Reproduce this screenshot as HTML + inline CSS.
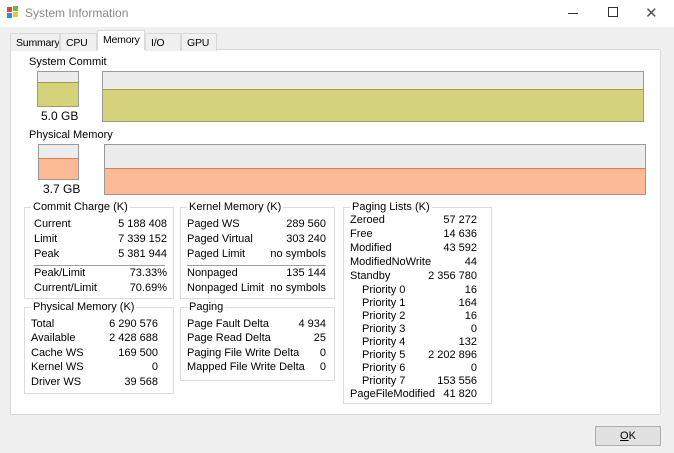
<!DOCTYPE html>
<html><head><style>
*{margin:0;padding:0;box-sizing:border-box}
body{width:674px;height:453px;background:#f0f0f0;font-family:"Liberation Sans",sans-serif;font-size:11px;color:#000;position:relative;overflow:hidden}
.a{position:absolute}
.title{left:0;top:0;width:674px;height:27px;background:#fff}
.tab{height:18px;border:1px solid #d9d9d9;border-bottom:none;background:#f0f0f0;padding:3px 0 0 5px;top:33px;font-size:10.5px;letter-spacing:-0.2px;white-space:nowrap;overflow:hidden}
.panel{left:10px;top:49px;width:651px;height:366px;background:#fff;border:1px solid #d9d9d9}
.gb{border:1px solid #dcdcdc}
.gb .t{position:absolute;top:-7px;left:6px;background:#fff;padding:0 2px}
.r{position:absolute;left:0;right:0;height:14px}
.r span{position:absolute;right:0}
</style></head><body>
<div class="a title"></div>
<svg class="a" style="left:6px;top:5px" width="14" height="14"><rect x="1" y="2" width="5" height="5" fill="#e8452c"/><rect x="7" y="1" width="5" height="5" fill="#6bbb3a"/><rect x="1" y="8" width="5" height="5" fill="#2a8de0"/><rect x="7" y="7" width="5" height="5" fill="#f6c12b"/></svg>
<div class="a" style="left:25px;top:6px;font-size:12px;color:#888">System Information</div>
<div class="a" style="left:568px;top:13px;width:10px;height:1px;background:#333"></div>
<div class="a" style="left:608px;top:7px;width:10px;height:10px;border:1px solid #333"></div>
<div class="a" style="left:645px;top:4px;font-size:15px;color:#555">✕</div>

<div class="a panel"></div>
<div class="a tab" style="left:10px;width:50px">Summary</div>
<div class="a tab" style="left:60px;width:37px">CPU</div>
<div class="a tab" style="left:97px;top:30px;height:20px;width:48px;background:#fff;border-color:#d9d9d9">Memory</div>
<div class="a tab" style="left:145px;width:36px">I/O</div>
<div class="a tab" style="left:181px;width:36px">GPU</div>

<div class="a" style="left:29px;top:56px">System Commit</div>
<div class="a" style="left:37px;top:71px;width:42px;height:36px;border:1px solid #999;background:#ececec"><div class="a" style="left:0;right:0;top:10px;bottom:0;background:#d4d37b;border-top:1px solid #a6a41e"></div></div>
<div class="a" style="left:41px;top:109px;font-size:12px">5.0 GB</div>
<div class="a" style="left:102px;top:71px;width:542px;height:51px;border:1px solid #999;background:#ececec"><div class="a" style="left:0;right:0;top:17px;bottom:0;background:#d4d37b;border-top:1px solid #a6a41e"></div></div>

<div class="a" style="left:29px;top:129px">Physical Memory</div>
<div class="a" style="left:38px;top:144px;width:41px;height:36px;border:1px solid #999;background:#ececec"><div class="a" style="left:0;right:0;top:13px;bottom:0;background:#fcba97;border-top:1px solid #f07a3c"></div></div>
<div class="a" style="left:43px;top:182px;font-size:12px">3.7 GB</div>
<div class="a" style="left:104px;top:144px;width:542px;height:51px;border:1px solid #999;background:#ececec"><div class="a" style="left:0;right:0;top:23px;bottom:0;background:#fcba97;border-top:1px solid #f07a3c"></div></div>

<div class="a gb" style="left:24px;top:207px;width:150px;height:92px"><div class="t">Commit Charge (K)</div>
<div class="r" style="top:10px;left:9px;right:6px">Current<span>5 188 408</span></div>
<div class="r" style="top:25px;left:9px;right:6px">Limit<span>7 339 152</span></div>
<div class="r" style="top:40px;left:9px;right:6px">Peak<span>5 381 944</span></div>
<div class="a" style="top:57px;left:9px;right:8px;height:1px;background:#a0a0a0"></div>
<div class="r" style="top:59px;left:9px;right:6px">Peak/Limit<span>73.33%</span></div>
<div class="r" style="top:74px;left:9px;right:6px">Current/Limit<span>70.69%</span></div></div>

<div class="a gb" style="left:180px;top:207px;width:155px;height:92px"><div class="t">Kernel Memory (K)</div>
<div class="r" style="top:10px;left:6px;right:8px">Paged WS<span>289 560</span></div>
<div class="r" style="top:25px;left:6px;right:8px">Paged Virtual<span>303 240</span></div>
<div class="r" style="top:40px;left:6px;right:8px">Paged Limit<span>no symbols</span></div>
<div class="a" style="top:57px;left:6px;right:8px;height:1px;background:#a0a0a0"></div>
<div class="r" style="top:59px;left:6px;right:8px">Nonpaged<span>135 144</span></div>
<div class="r" style="top:74px;left:6px;right:8px">Nonpaged Limit<span>no symbols</span></div></div>

<div class="a gb" style="left:24px;top:307px;width:150px;height:87px"><div class="t">Physical Memory (K)</div>
<div class="r" style="top:10px;left:6px;right:15px">Total<span>6 290 576</span></div>
<div class="r" style="top:24px;left:6px;right:15px">Available<span>2 428 688</span></div>
<div class="r" style="top:39px;left:6px;right:15px">Cache WS<span>169 500</span></div>
<div class="r" style="top:53px;left:6px;right:15px">Kernel WS<span>0</span></div>
<div class="r" style="top:68px;left:6px;right:15px">Driver WS<span>39 568</span></div></div>

<div class="a gb" style="left:180px;top:307px;width:155px;height:74px"><div class="t">Paging</div>
<div class="r" style="top:10px;left:6px;right:8px">Page Fault Delta<span>4 934</span></div>
<div class="r" style="top:24px;left:6px;right:8px">Page Read Delta<span>25</span></div>
<div class="r" style="top:39px;left:6px;right:8px">Paging File Write Delta<span>0</span></div>
<div class="r" style="top:53px;left:6px;right:8px">Mapped File Write Delta<span>0</span></div></div>

<div class="a gb" style="left:343px;top:207px;width:149px;height:197px"><div class="t">Paging Lists (K)</div>
<div class="r" style="top:6px;left:6px;right:14px">Zeroed<span>57 272</span></div>
<div class="r" style="top:20px;left:6px;right:14px">Free<span>14 636</span></div>
<div class="r" style="top:34px;left:6px;right:14px">Modified<span>43 592</span></div>
<div class="r" style="top:48px;left:6px;right:14px">ModifiedNoWrite<span>44</span></div>
<div class="r" style="top:62px;left:6px;right:14px">Standby<span>2 356 780</span></div>
<div class="r" style="top:76px;left:18px;right:14px">Priority 0<span>16</span></div>
<div class="r" style="top:89px;left:18px;right:14px">Priority 1<span>164</span></div>
<div class="r" style="top:102px;left:18px;right:14px">Priority 2<span>16</span></div>
<div class="r" style="top:115px;left:18px;right:14px">Priority 3<span>0</span></div>
<div class="r" style="top:128px;left:18px;right:14px">Priority 4<span>132</span></div>
<div class="r" style="top:141px;left:18px;right:14px">Priority 5<span>2 202 896</span></div>
<div class="r" style="top:154px;left:18px;right:14px">Priority 6<span>0</span></div>
<div class="r" style="top:167px;left:18px;right:14px">Priority 7<span>153 556</span></div>
<div class="r" style="top:180px;left:6px;right:14px">PageFileModified<span>41 820</span></div></div>

<div class="a" style="left:595px;top:426px;width:66px;height:20px;border:1px solid #adadad;background:#e1e1e1;text-align:center;line-height:18px"><u>O</u>K</div>
</body></html>
